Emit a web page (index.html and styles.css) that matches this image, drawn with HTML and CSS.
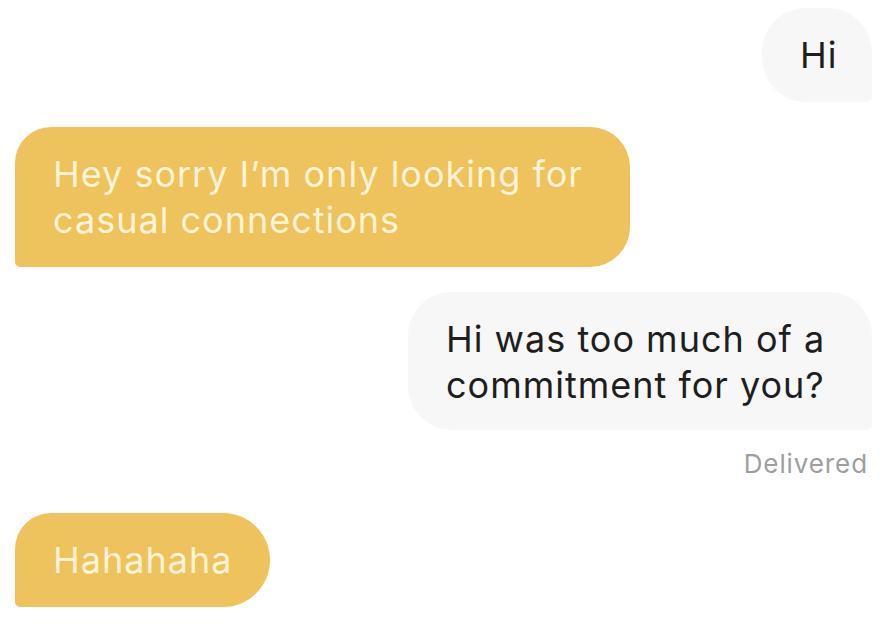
FILE: index.html
```html
<!DOCTYPE html>
<html lang="en">
<head>
<meta charset="utf-8">
<title>Chat</title>
<link rel="stylesheet" href="styles.css">
</head>
<body>
<main class="chat">
  <div class="msg msg-out msg-hi">Hi</div>
  <div class="msg msg-in msg-casual">Hey sorry I’m only looking for<br>casual connections</div>
  <div class="msg msg-out msg-commit">Hi was too much of a<br>commitment for you?</div>
  <div class="status">Delivered</div>
  <div class="msg msg-in msg-haha">Hahahaha</div>
</main>
</body>
</html>
```

FILE: styles.css
```css
html, body {
  margin: 0;
  padding: 0;
  background: #ffffff;
}

.chat {
  width: 886px;
  height: 644px;
  box-sizing: border-box;
  padding: 8px 14px 0 15px;
  display: flex;
  flex-direction: column;
  font-family: "Inter", "Liberation Sans", sans-serif;
}

.msg {
  box-sizing: border-box;
  font-size: 36px;
  line-height: 46px;
  padding: 24px 30px 24px 38px;
  white-space: nowrap;
  letter-spacing: 1px;
}

.msg-out {
  align-self: flex-end;
  background: #f7f7f7;
  color: #1e1e1e;
  border-radius: 44px 44px 5px 44px;
}

.msg-in {
  align-self: flex-start;
  background: #eec25c;
  color: #fdf4d6;
  border-radius: 36px 40px 40px 5px;
}

.msg-hi {
  width: 110px;
  height: 94px;
}

.msg-casual {
  width: 615px;
  height: 140px;
  margin-top: 25px;
}

.msg-commit {
  width: 464px;
  height: 138px;
  margin-top: 25px;
}

.status {
  align-self: flex-end;
  margin-top: 19px;
  margin-right: 4px;
  font-size: 26px;
  line-height: 30px;
  letter-spacing: 0.9px;
  color: #9e9e9e;
}

.msg-haha {
  width: 255px;
  height: 94px;
  margin-top: 34px;
  border-radius: 36px 47px 47px 5px;
}
```
